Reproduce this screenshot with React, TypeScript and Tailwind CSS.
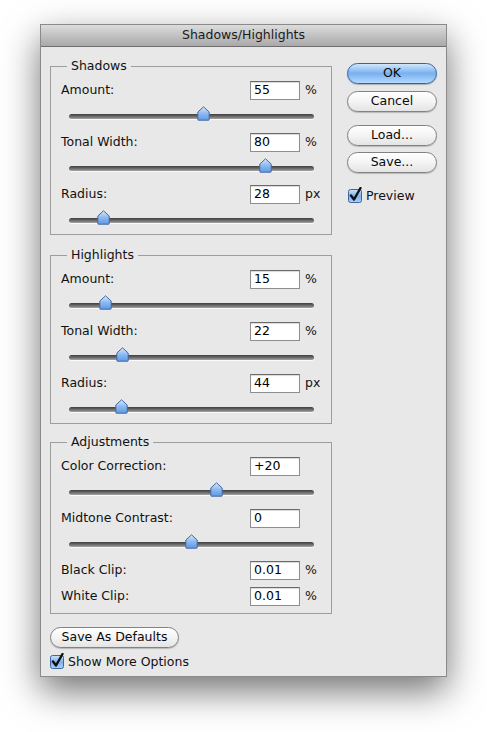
import type { CSSProperties } from 'react';

type SliderRow = { label: string; value: string; unit?: string; pos?: number };

const shadows: SliderRow[] = [
  { label: 'Amount:', value: '55', unit: '%', pos: 0.55 },
  { label: 'Tonal Width:', value: '80', unit: '%', pos: 0.8 },
  { label: 'Radius:', value: '28', unit: 'px', pos: 0.14 },
];

const highlights: SliderRow[] = [
  { label: 'Amount:', value: '15', unit: '%', pos: 0.15 },
  { label: 'Tonal Width:', value: '22', unit: '%', pos: 0.22 },
  { label: 'Radius:', value: '44', unit: 'px', pos: 0.216 },
];

const TRACK = 245;

const Thumb = ({ style }: { style: CSSProperties }) => (
  <svg className="absolute top-[6px]" width="13" height="15" viewBox="0 0 13 15" style={style}>
    <defs>
      <linearGradient id="thumbFill" x1="0" y1="0" x2="0" y2="1">
        <stop offset="0" stopColor="#d6e8fb" />
        <stop offset="0.5" stopColor="#8dbaf0" />
        <stop offset="1" stopColor="#5e9ae6" />
      </linearGradient>
    </defs>
    <path d="M6.5 0.8 L12.2 6 L12.2 13.6 Q12.2 14.2 11.6 14.2 L1.4 14.2 Q0.8 14.2 0.8 13.6 L0.8 6 Z" fill="url(#thumbFill)" stroke="#4469a0" strokeWidth="1" />
  </svg>
);

const Slider = ({ pos, last }: { pos: number; last?: boolean }) => (
  <div className={last ? 'relative h-[30px]' : 'relative h-[32px]'}>
    <div className="absolute left-[8px] top-[14px] h-[5px] w-[245px] rounded-full bg-gradient-to-b from-[#3f3f3f] via-[#6b6b6b] to-[#a5a5a5] shadow-[0_1px_0_rgba(255,255,255,0.8)]" />
    <Thumb style={{ left: 8 + pos * TRACK - 6.5 }} />
  </div>
);

const Field = ({ label, value, unit }: { label: string; value: string; unit?: string }) => (
  <div className="flex h-[20px] items-center">
    <span className="flex-1 text-[#111]">{label}</span>
    <div className="flex h-[19px] w-[50px] items-center border border-[#8e8e8e] border-t-[#6a6a6a] bg-white pl-[3px] shadow-[inset_0_1px_1px_rgba(0,0,0,0.15)]">
      {value}
    </div>
    <span className="ml-[5px] w-[16px] text-[#111]">{unit}</span>
  </div>
);

const Group = ({ title, children, className }: { title: string; children: React.ReactNode; className?: string }) => (
  <fieldset className={`border border-[#9d9d9d] px-[10px] ${className ?? ''}`}>
    <legend className="ml-[6px] px-[4px] leading-[16px] text-[#111]">{title}</legend>
    {children}
  </fieldset>
);

const Check = () => (
  <svg width="15" height="16" viewBox="0 0 15 16" className="shrink-0">
    <defs>
      <linearGradient id="checkFill" x1="0" y1="0" x2="0" y2="1">
        <stop offset="0" stopColor="#cfe3fa" />
        <stop offset="0.5" stopColor="#7eb2ee" />
        <stop offset="1" stopColor="#a9d0f7" />
      </linearGradient>
    </defs>
    <rect x="0.5" y="2.5" width="13" height="13" rx="2" fill="url(#checkFill)" stroke="#3f66a0" />
    <path d="M3 8.5 L6 12.5 L12.5 1" fill="none" stroke="#111" strokeWidth="2.4" strokeLinecap="round" strokeLinejoin="round" />
  </svg>
);

const PillButton = ({ children, primary }: { children: React.ReactNode; primary?: boolean }) => (
  <button
    className={
      primary
        ? 'flex h-[21px] w-[90px] items-center justify-center rounded-full border border-[#3763a2] bg-gradient-to-b from-[#d2e6fb] via-[#78b0f0] to-[#b4dafc] text-[#0a0a0a] shadow-[0_1px_1px_rgba(0,0,0,0.25)]'
        : 'flex h-[21px] w-[90px] items-center justify-center rounded-full border border-[#828282] bg-gradient-to-b from-white via-[#f4f4f4] to-[#e4e4e4] text-[#0a0a0a] shadow-[0_1px_1px_rgba(0,0,0,0.2)]'
    }
  >
    {children}
  </button>
);

export default function App() {
  return (
    <div className="h-[732px] w-[487px] bg-white pl-[40px] pt-[24px] font-['Lucida_Grande','DejaVu_Sans',sans-serif] text-[12.5px]">
      <div className="flex h-[653px] w-[407px] flex-col border border-[#8a8a8a] bg-[#e8e8e8] shadow-[0_14px_34px_rgba(0,0,0,0.55)]">
        {/* title bar */}
        <div className="flex h-[22px] items-center justify-center border-b border-[#6f6f6f] bg-gradient-to-b from-[#dcdcdc] to-[#a9a9a9] text-[#1a1a1a]">
          Shadows/Highlights
        </div>

        <div className="flex">
          {/* left column: the three adjustment groups */}
          <div className="ml-[9px] w-[282px] pt-[11px]">
            <Group title="Shadows">
              <div className="pt-[6px]">
                {shadows.map((r, i) => (
                  <div key={r.label}>
                    <Field label={r.label} value={r.value} unit={r.unit} />
                    <Slider pos={r.pos ?? 0} last={i === shadows.length - 1} />
                  </div>
                ))}
              </div>
            </Group>

            <Group title="Highlights" className="mt-[12px]">
              <div className="pt-[6px]">
                {highlights.map((r, i) => (
                  <div key={r.label}>
                    <Field label={r.label} value={r.value} unit={r.unit} />
                    <Slider pos={r.pos ?? 0} last={i === highlights.length - 1} />
                  </div>
                ))}
              </div>
            </Group>

            <Group title="Adjustments" className="mt-[10px] pb-[7px]">
              <div className="pt-[6px]">
                <Field label="Color Correction:" value="+20" />
                <Slider pos={0.6} />
                <Field label="Midtone Contrast:" value="0" />
                <Slider pos={0.5} />
                <Field label="Black Clip:" value="0.01" unit="%" />
                <div className="mt-[6px]">
                  <Field label="White Clip:" value="0.01" unit="%" />
                </div>
              </div>
            </Group>

            <button className="mt-[13px] flex h-[21px] w-[129px] items-center justify-center rounded-full border border-[#828282] bg-gradient-to-b from-white via-[#f4f4f4] to-[#e4e4e4] text-[#0a0a0a] shadow-[0_1px_1px_rgba(0,0,0,0.2)]">
              Save As Defaults
            </button>
            <label className="mt-[3px] flex items-center gap-[3px] text-[#111]">
              <Check />
              <span className="pt-[2px]">Show More Options</span>
            </label>
          </div>

          {/* right column: dialog actions */}
          <div className="ml-[15px] flex flex-col pt-[16px]">
            <PillButton primary>OK</PillButton>
            <div className="mt-[7px]">
              <PillButton>Cancel</PillButton>
            </div>
            <div className="mt-[13px]">
              <PillButton>Load...</PillButton>
            </div>
            <div className="mt-[6px]">
              <PillButton>Save...</PillButton>
            </div>
            <label className="ml-[1px] mt-[12px] flex items-center gap-[3px] text-[#111]">
              <Check />
              <span className="pt-[2px]">Preview</span>
            </label>
          </div>
        </div>
      </div>
    </div>
  );
}
